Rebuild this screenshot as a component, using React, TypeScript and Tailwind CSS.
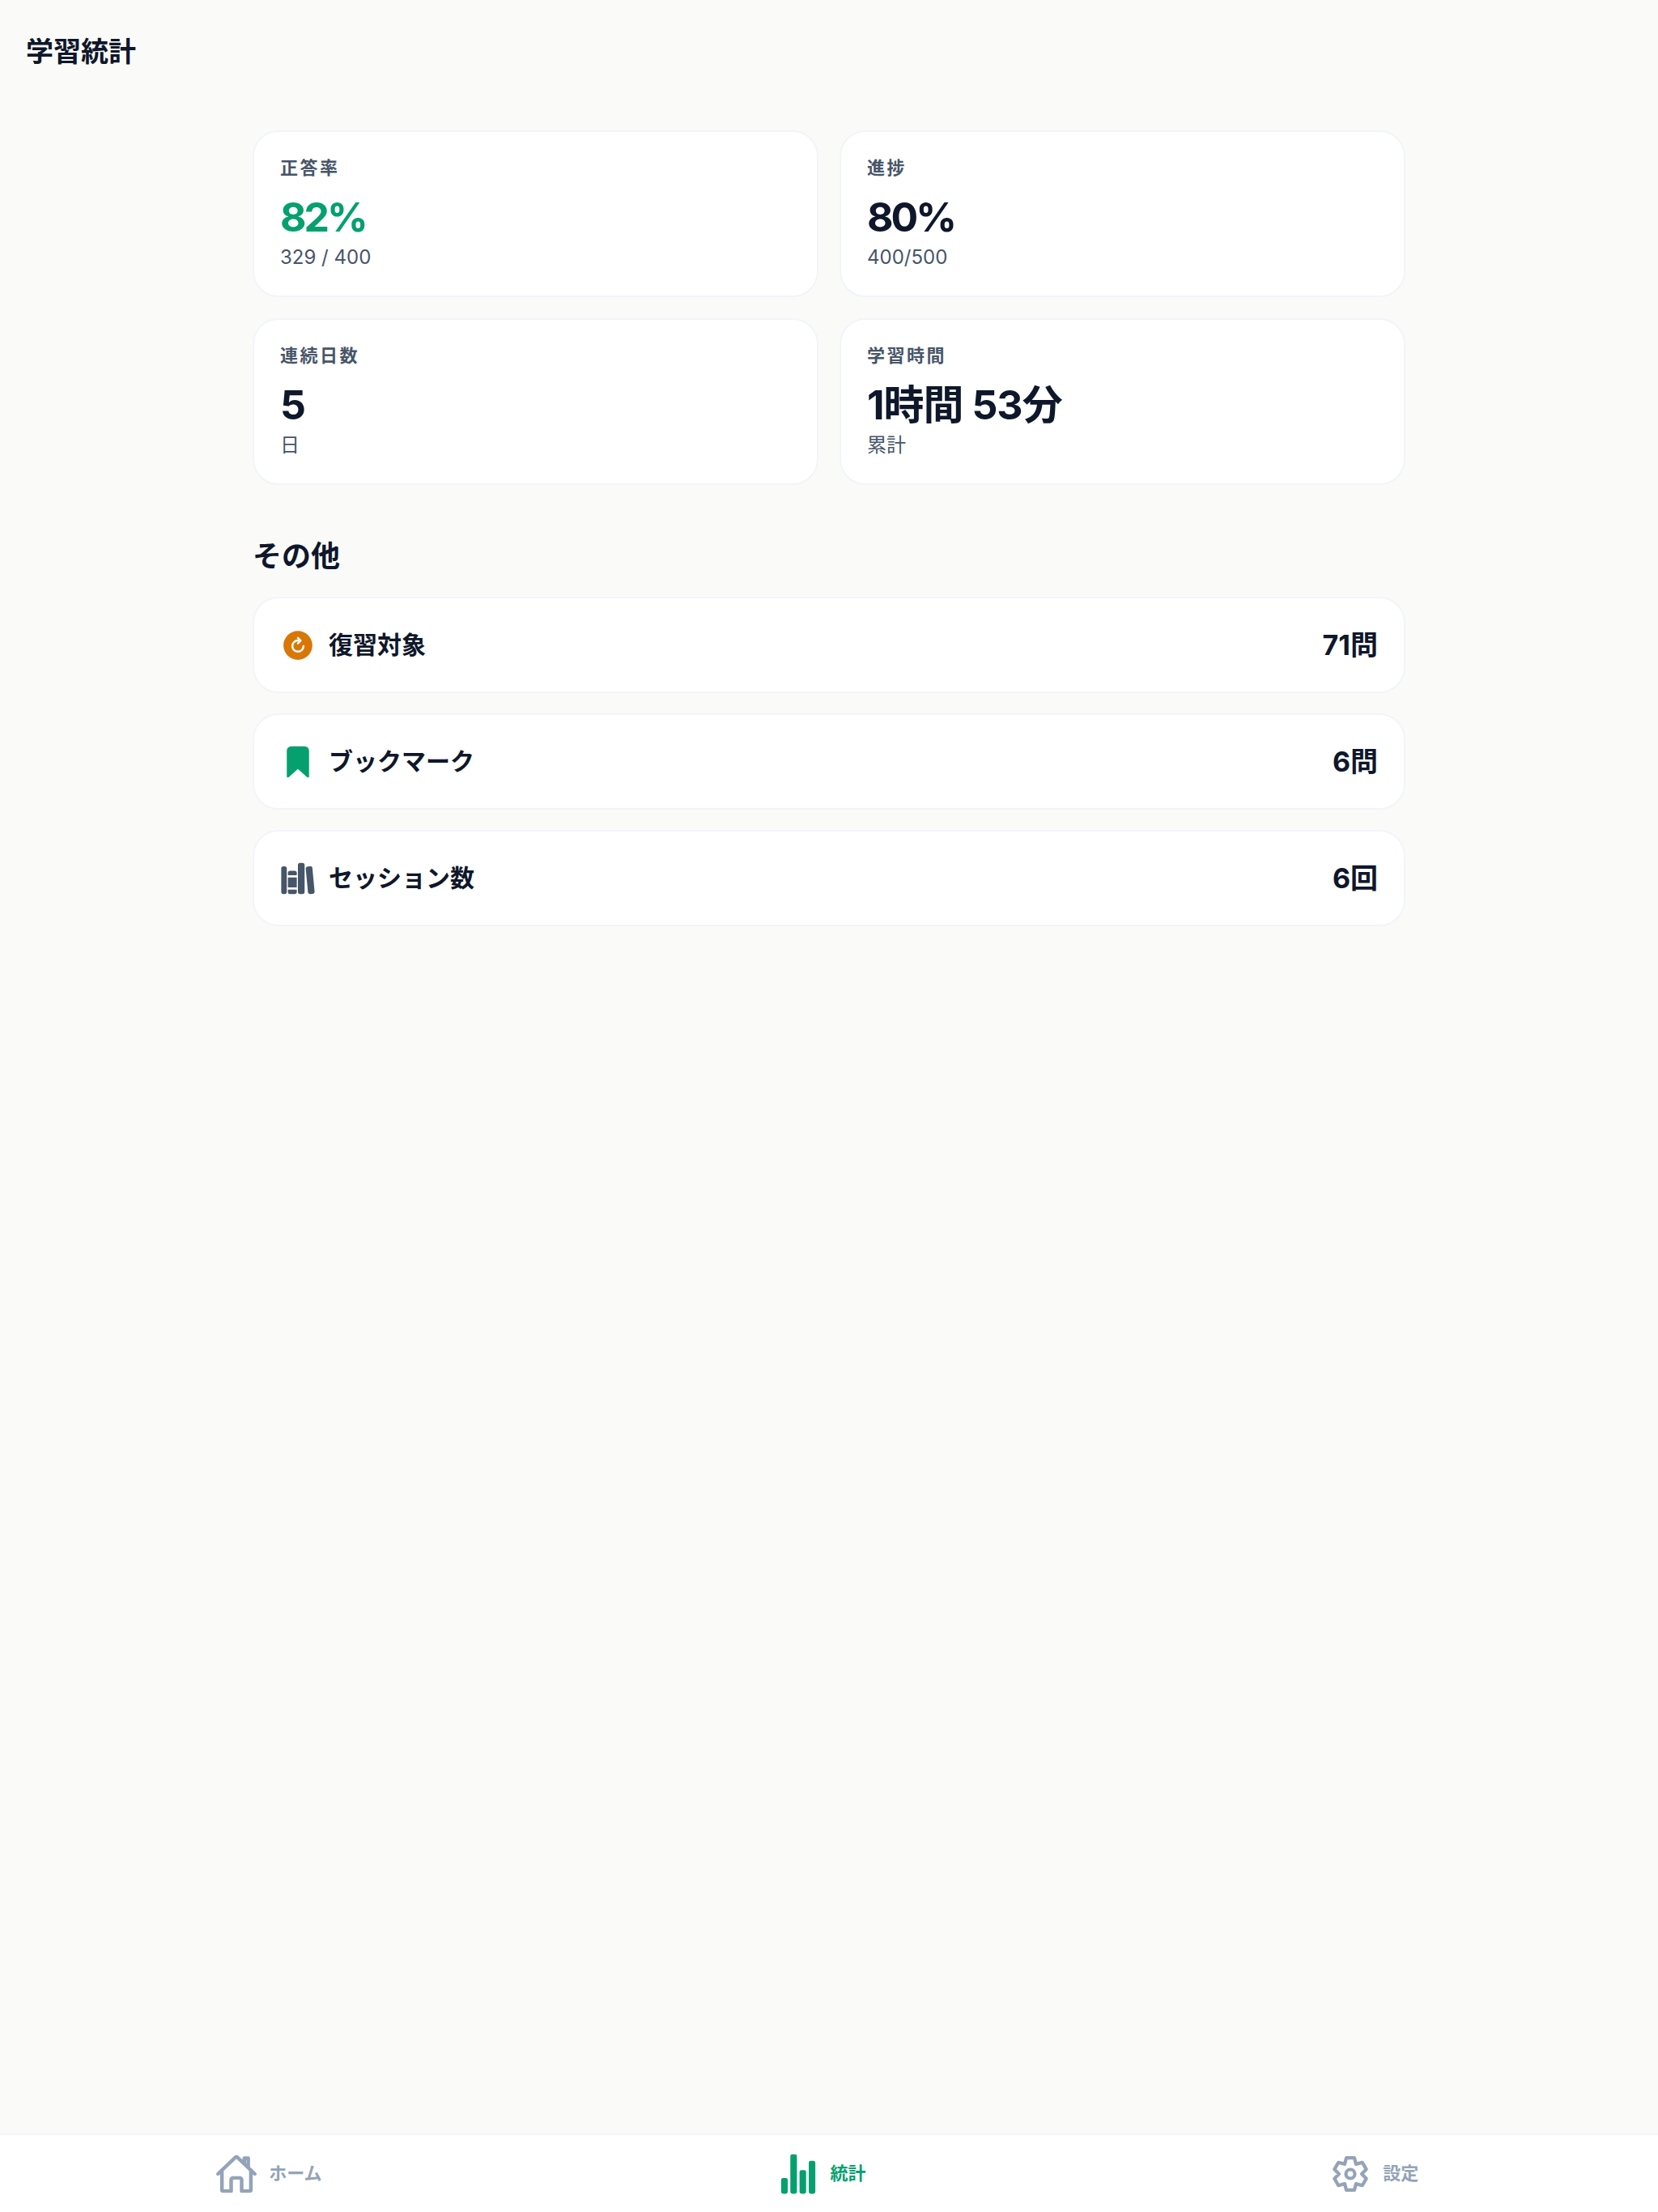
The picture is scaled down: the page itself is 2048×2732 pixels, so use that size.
import type { ReactNode } from 'react';
import { IoBookmark, IoHomeOutline, IoLibrary, IoRefreshCircle, IoStatsChart } from 'react-icons/io5';

const font = 'font-["Inter","Noto_Sans_CJK_JP",sans-serif]';

// six flat teeth, same outline as the tab bar gear
function gearPath() {
  const pt = (deg: number, r: number) => {
    const a = (deg * Math.PI) / 180;
    return `${(24 + r * Math.cos(a)).toFixed(2)} ${(24 + r * Math.sin(a)).toFixed(2)}`;
  };
  const parts: string[] = [];
  for (let k = 0; k < 6; k++) {
    const a = k * 60 - 90;
    parts.push(pt(a - 14, 20.5), pt(a + 14, 20.5), pt(a + 30, 14));
  }
  return `M${parts.join('L')}Z`;
}

function GearIcon() {
  return (
    <svg width="52" height="52" viewBox="-2 -2 52 52" fill="none" stroke="#94a3b8" strokeWidth="4.2" strokeLinejoin="round">
      <path d={gearPath()} />
      <circle cx="24" cy="24" r="5.5" />
    </svg>
  );
}

function StatCard({ label, value, sub, green, wide }: { label: string; value: string; sub: string; green?: boolean; wide?: boolean }) {
  return (
    <div className="h-[206px] rounded-[32px] border-2 border-[#f1f5f9] bg-white px-8 pt-[28px]">
      <div className="text-[22px] leading-[32px] font-bold tracking-[2.5px] text-[#475569]">{label}</div>
      <div className={`mt-[14px] text-[50px] leading-[62px] font-bold ${wide ? 'tracking-[-1px]' : 'tracking-[-3px]'} ${green ? 'text-[#06a06f]' : 'text-[#0f172a]'}`}>{value}</div>
      <div className="mt-[1px] text-[24px] leading-[36px] text-[#475569]">{sub}</div>
    </div>
  );
}

function Row({ icon, label, value }: { icon: ReactNode; label: string; value: string }) {
  return (
    <div className="flex h-[119px] items-center justify-between rounded-[32px] border-2 border-[#f1f5f9] bg-white px-8">
      <div className="flex items-center gap-4">
        {icon}
        <span className="text-[30px] font-bold text-[#0f172a]">{label}</span>
      </div>
      <span className="text-[34px] font-bold text-[#0f172a]">{value}</span>
    </div>
  );
}

function NavItem({ icon, label, active }: { icon: ReactNode; label: string; active?: boolean }) {
  return (
    <div className="flex flex-1 items-center justify-center gap-[14px] pr-[19px]">
      {icon}
      <span className={`text-[22px] font-bold ${active ? 'text-[#06a06f]' : 'text-[#94a3b8]'}`}>{label}</span>
    </div>
  );
}

export default function App() {
  return (
    <div className={`flex h-[2732px] flex-col bg-[#fafaf9] ${font}`}>
      <header className="flex h-[127px] items-center pl-[32px] text-[34px] font-bold text-[#0f172a]">学習統計</header>
      <main className="mx-auto flex w-[1424px] flex-1 flex-col pt-[34px]">
        <div className="grid grid-cols-2 gap-[26px]">
          <StatCard label="正答率" value="82%" sub="329 / 400" green />
          <StatCard label="進捗" value="80%" sub="400/500" />
          <StatCard label="連続日数" value="5" sub="日" />
          <StatCard label="学習時間" value="1時間 53分" sub="累計" wide />
        </div>
        <h2 className="mt-[60px] mb-[22px] text-[36px] leading-[56px] font-bold text-[#0f172a]">その他</h2>
        <div className="flex flex-col gap-[25px]">
          <Row icon={<IoRefreshCircle size={44} color="#d97706" />} label="復習対象" value="71問" />
          <Row icon={<IoBookmark size={44} color="#06a06f" />} label="ブックマーク" value="6問" />
          <Row icon={<IoLibrary size={44} color="#475569" />} label="セッション数" value="6回" />
        </div>
      </main>
      <nav className="flex h-[97px] items-center border-t-2 border-[#f1f5f9] bg-white">
        <NavItem icon={<IoHomeOutline size={52} color="#94a3b8" className="[&_path]:stroke-[44]" />} label="ホーム" />
        <NavItem icon={<IoStatsChart size={52} color="#06a06f" />} label="統計" active />
        <NavItem icon={<GearIcon />} label="設定" />
      </nav>
    </div>
  );
}
